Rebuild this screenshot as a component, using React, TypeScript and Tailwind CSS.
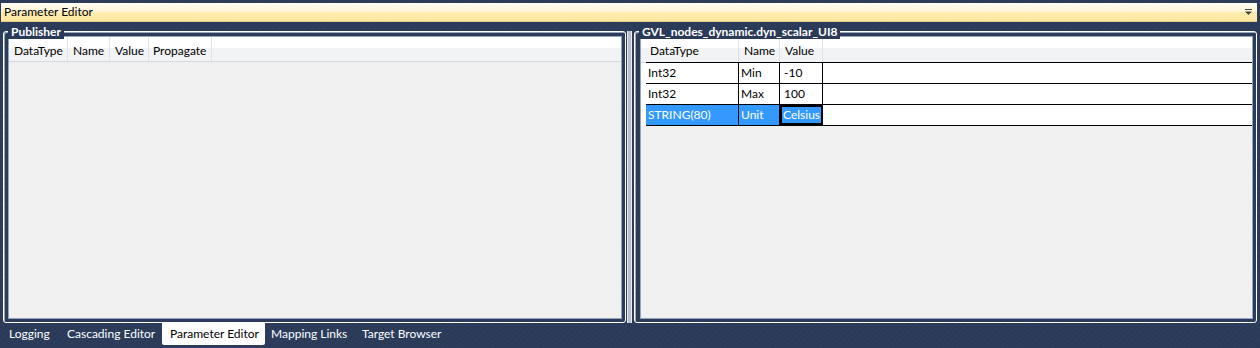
import React from "react";

const hatch =
  "bg-[#2a3a58] bg-[repeating-linear-gradient(135deg,#2d3e5c_0px,#2d3e5c_2px,#27375400_2px,#27375400_4px)]";

function GroupBox({
  title,
  pad,
  children,
}: {
  title: string;
  pad: string;
  children: React.ReactNode;
}) {
  return (
    <div className="relative h-full w-[623px] pt-[5px]">
      <div
        className={`h-full rounded-[3px] border border-white ${pad} pt-[4px] pb-[3px] shadow-[inset_1px_1px_0_#9aa6b8]`}
      >
        <div className="flex h-full flex-col overflow-hidden border border-[#93a4c0] bg-[#f0f0f0]">
          {children}
        </div>
      </div>
      <div className="absolute left-[5px] top-[-1px] bg-[#2a3a58] px-[3px] text-[12px] font-bold leading-[14px] text-white">
        {title}
      </div>
    </div>
  );
}

function HeaderCell({ label, w, pl }: { label: string; w: string; pl: string }) {
  return (
    <div
      className={`${w} ${pl} flex h-full items-center border-r border-[#dfe2e7] pt-[3px] text-black`}
    >
      {label}
    </div>
  );
}

function Row({
  type,
  name,
  value,
  selected,
}: {
  type: string;
  name: string;
  value: string;
  selected?: boolean;
}) {
  return (
    <div className="flex h-[21px]">
      <div className="w-[5px] bg-white" />
      <div className="flex flex-1 border-b border-black bg-white">
        <div
          className={`flex w-[93px] items-center border-r border-black pl-[2px] ${
            selected ? "bg-[#3399ff] text-white" : "text-black"
          }`}
        >
          {type}
        </div>
        <div
          className={`flex w-[41px] items-center border-r border-black pl-[2px] ${
            selected ? "bg-[#3399ff] text-white" : "text-black"
          }`}
        >
          {name}
        </div>
        {selected ? (
          <div className="flex w-[43px] items-center border-2 border-black bg-[#3399ff] pl-[1px] text-white">
            {value}
          </div>
        ) : (
          <div className="flex w-[43px] items-center border-r border-black pl-[4px] text-black">
            {value}
          </div>
        )}
        <div className="flex-1 bg-white" />
      </div>
    </div>
  );
}

const headerBg =
  "bg-[linear-gradient(to_bottom,#ffffff_0%,#ffffff_45%,#f2f3f5_45%,#f2f3f5_100%)]";

export default function App() {
  return (
    <div
      className={`flex h-[348px] w-[1260px] flex-col overflow-hidden ${hatch} font-['Lato','Noto_Sans',sans-serif] text-[12px]`}
    >
      {/* top bar */}
      <div className="ml-[1px] mr-[3px] mt-[3px] flex h-[19px] items-center justify-between border-b border-[#e6cb86] bg-[linear-gradient(to_bottom,#fffdf2_0%,#fff6da_45%,#ffebad_55%,#ffe7a4_100%)] pl-[3px] pr-[4px] text-black">
        <span className="leading-[14px]">Parameter Editor</span>
        <svg width="9" height="7" viewBox="0 0 9 7">
          <rect x="1" y="0" width="7" height="1" fill="#444" />
          <path d="M1 2.5h7L4.5 6z" fill="#444" />
        </svg>
      </div>

      {/* panels */}
      <div className="mt-[4px] flex h-[297px] pl-[3px]">
        <GroupBox title="Publisher" pad="pl-[4px] pr-[3px]">
          <div
            className={`flex h-[25px] border-b border-[#d5dae2] ${headerBg}`}
          >
            <HeaderCell label="DataType" w="w-[59px]" pl="pl-[5px]" />
            <HeaderCell label="Name" w="w-[42px]" pl="pl-[5px]" />
            <HeaderCell label="Value" w="w-[39px]" pl="pl-[5px]" />
            <HeaderCell label="Propagate" w="w-[63px]" pl="pl-[4px]" />
          </div>
        </GroupBox>

        <div className="flex h-full w-[8px] pt-[5px]">
          <div className="ml-[1px] h-full w-[5px] border-x border-[#e8ebf0] bg-[#b9c0cc]" />
        </div>

        <GroupBox title="GVL_nodes_dynamic.dyn_scalar_UI8" pad="pl-[5px] pr-[3px]">
          <div className={`flex h-[25px] ${headerBg}`}>
            <HeaderCell label="DataType" w="w-[98px]" pl="pl-[9px]" />
            <HeaderCell label="Name" w="w-[41px]" pl="pl-[5px]" />
            <HeaderCell label="Value" w="w-[43px]" pl="pl-[5px]" />
          </div>
          <div className="flex h-[1px]">
            <div className="w-[5px] bg-[#d5dae2]" />
            <div className="flex-1 bg-black" />
          </div>
          <Row type="Int32" name="Min" value="-10" />
          <Row type="Int32" name="Max" value="100" />
          <Row type="STRING(80)" name="Unit" value="Celsius" selected />
        </GroupBox>
      </div>

      {/* tabs */}
      <div className="flex h-[22px] pl-[3px] text-white">
        <div className="flex w-[58px] items-center pl-[6px]">Logging</div>
        <div className="flex w-[101px] items-center pl-[6px]">Cascading Editor</div>
        <div className="flex w-[103px] items-center rounded-b-[2px] bg-white pl-[8px] text-black">
          Parameter Editor
        </div>
        <div className="flex w-[91px] items-center pl-[6px]">Mapping Links</div>
        <div className="flex w-[94px] items-center pl-[6px]">Target Browser</div>
      </div>
    </div>
  );
}
